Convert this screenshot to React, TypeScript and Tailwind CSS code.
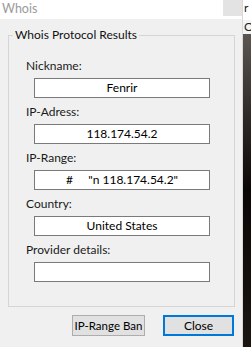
const fields = [
  { label: "Nickname:", value: "Fenrir" },
  { label: "IP-Adress:", value: "118.174.54.2" },
  { label: "IP-Range:", value: "#     \"n 118.174.54.2\"" },
  { label: "Country:", value: "United States" },
  { label: "Provider details:", value: "" },
];

function Field({ label, value }: { label: string; value: string }) {
  return (
    <div className="flex flex-col">
      <div className="h-[16px] pl-[17px] leading-[16px]">{label}</div>
      <div className="ml-[25px] mt-[4px] mb-[6px] flex h-[20px] w-[176px] items-center justify-center whitespace-pre border border-[#7a7a7a] bg-white leading-[16px] text-black">
        {value}
      </div>
    </div>
  );
}

export default function App() {
  return (
    <div
      className="flex h-[347px] w-[251px] overflow-hidden text-[12px] text-[#1a1a1a]"
      style={{ fontFamily: 'Lato, "Noto Sans", sans-serif' }}
    >
      <div className="flex w-[243px] flex-col border-r border-[#d8d8d8] bg-[#f0f0f0]">
        <div className="flex h-[19px] items-start justify-between bg-white">
          <span className="pl-[2px] text-[12.5px] leading-[18px] text-[#9a9a9a]">Whois</span>
          <div className="h-[16px] w-[19px] bg-[#e3e3e3]" />
        </div>

        <div className="px-[8px] pt-[8px]">
          <fieldset className="w-[227px] border border-[#d5d5d5] pb-[18px] pt-[15px]">
            <legend className="ml-[4px] px-[2px] leading-[16px] text-[#111]">
              Whois Protocol Results
            </legend>
            {fields.map((f) => (
              <Field key={f.label} label={f.label} value={f.value} />
            ))}
          </fieldset>
        </div>

        <div className="mt-[8px] flex gap-[18px] pl-[72px]">
          <button className="h-[21px] w-[73px] whitespace-nowrap border border-[#adadad] bg-[#e1e1e1] text-[11.5px] leading-[16px] text-black">
            IP-Range Ban
          </button>
          <button className="h-[21px] w-[71px] border-2 border-[#0078d7] bg-[#e1e1e1] leading-[16px] text-black">
            Close
          </button>
        </div>
      </div>

      <div className="flex w-[8px] flex-col overflow-hidden">
        <div className="h-[20px] bg-white pl-[1px] leading-[16px] text-[#222]">r</div>
        <div className="h-[14px] bg-[#f4f4f4] pl-[1px] leading-[14px] text-[#222]">O</div>
        <div className="flex-1 bg-gradient-to-b from-[#5d5650] via-[#0c0707] to-[#1c1510]" />
      </div>
    </div>
  );
}
